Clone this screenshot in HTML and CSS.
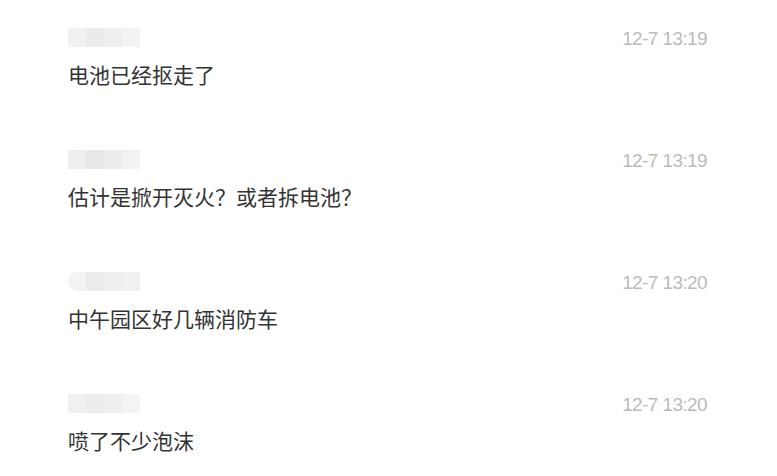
FILE: index.html
```html
<!DOCTYPE html>
<html lang="zh-CN">
<head>
    <meta charset="UTF-8">
    <meta name="viewport" content="width=device-width, initial-scale=1.0">
    <title>评论</title>
    <link rel="stylesheet" href="styles.css">
</head>
<body>
    <!-- Comment list -->
    <div class="comment-list">
        <div class="comment">
            <div class="comment-head">
                <div class="nick nick-a"></div>
                <div class="time">12-7 13:19</div>
            </div>
            <div class="comment-text">电池已经抠走了</div>
        </div>

        <div class="comment">
            <div class="comment-head">
                <div class="nick nick-b"></div>
                <div class="time">12-7 13:19</div>
            </div>
            <div class="comment-text">估计是掀开灭火？或者拆电池？</div>
        </div>

        <div class="comment">
            <div class="comment-head">
                <div class="nick nick-c"></div>
                <div class="time">12-7 13:20</div>
            </div>
            <div class="comment-text">中午园区好几辆消防车</div>
        </div>

        <div class="comment">
            <div class="comment-head">
                <div class="nick nick-d"></div>
                <div class="time">12-7 13:20</div>
            </div>
            <div class="comment-text">喷了不少泡沫</div>
        </div>
    </div>
</body>
</html>
```

FILE: styles.css
```css
body {
    margin: 0;
    padding: 0;
    height: 100vh;
    background-color: #fff;
    font-family: "Microsoft YaHei", "Noto Sans CJK SC", "Liberation Sans", sans-serif;
    overflow: hidden;
}
.comment-list {
    padding: 28px 70px 0 68px;
}
.comment {
    height: 122px;
}
.comment:last-child {
    height: auto;
}
.comment-head {
    display: flex;
    justify-content: space-between;
    align-items: center;
    height: 19px;
}
/* mosaic over the user name */
.nick {
    width: 72px;
    height: 19px;
    background: linear-gradient(to right, #f1f1f1 0 18px, #ebebeb 18px 36px, #eeeeee 36px 54px, #f3f3f3 54px 72px);
}
.nick-b {
    background: linear-gradient(to right, #efefef 0 18px, #e8e8e8 18px 36px, #ececec 36px 54px, #f2f2f2 54px 72px);
}
.nick-c {
    border-radius: 10px 0 0 10px;
    background: linear-gradient(to right, #f3f3f3 0 18px, #ececec 18px 36px, #eeeeee 36px 54px, #f1f1f1 54px 72px);
}
.nick-d {
    background: linear-gradient(to right, #f0f0f0 0 18px, #ececec 18px 36px, #efefef 36px 54px, #f4f4f4 54px 72px);
}
.time {
    font-family: "Liberation Sans", Arial, sans-serif;
    font-size: 19px;
    letter-spacing: -0.6px;
    color: #bbb;
    padding-top: 3px;
}
.comment-text {
    margin-top: 12px;
    font-size: 21px;
    line-height: 1.5;
    color: #333;
}
```
